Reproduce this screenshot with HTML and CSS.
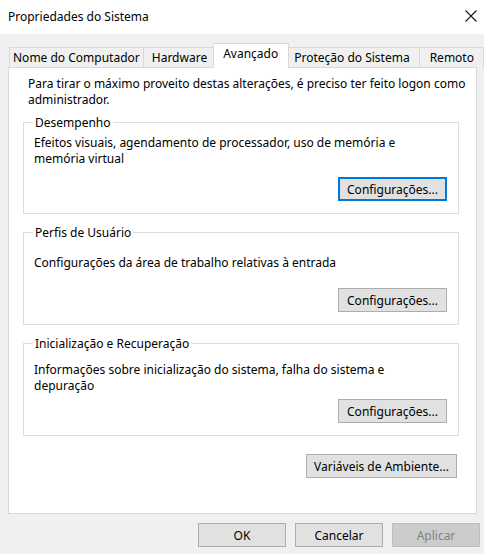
FILE: index.html
```html
<!DOCTYPE html>
<html lang="pt-BR">
<head>
  <meta charset="UTF-8" />
  <title>Propriedades do Sistema</title>
  <link rel="stylesheet" href="styles.css">
</head>
<body>

<div class="window">
  <div class="titlebar">
    <span class="title">Propriedades do Sistema</span>
    <svg class="close" width="12" height="12" viewBox="0 0 12 12">
      <path d="M0.5 0.5 L11.5 11.5 M11.5 0.5 L0.5 11.5" stroke="#1a1a1a" stroke-width="1.1" fill="none" />
    </svg>
  </div>

  <!-- Abas -->
  <div class="tabs">
    <div class="tab tab-first">Nome do Computador</div>
    <div class="tab">Hardware</div>
    <div class="tab active">Avançado</div>
    <div class="tab">Proteção do Sistema</div>
    <div class="tab tab-last">Remoto</div>
  </div>

  <div class="panel">
    <p class="intro">Para tirar o máximo proveito destas alterações, é preciso ter feito logon como<br>administrador.</p>

    <fieldset class="group group-perf">
      <legend>Desempenho</legend>
      <p class="desc">Efeitos visuais, agendamento de processador, uso de memória e<br>memória virtual</p>
      <div class="btn-row"><button class="btn btn-config focus">Configurações...</button></div>
    </fieldset>

    <fieldset class="group group-user">
      <legend>Perfis de Usuário</legend>
      <p class="desc">Configurações da área de trabalho relativas à entrada</p>
      <div class="btn-row"><button class="btn btn-config">Configurações...</button></div>
    </fieldset>

    <fieldset class="group group-boot">
      <legend>Inicialização e Recuperação</legend>
      <p class="desc">Informações sobre inicialização do sistema, falha do sistema e<br>depuração</p>
      <div class="btn-row"><button class="btn btn-config">Configurações...</button></div>
    </fieldset>

    <div class="env-row"><button class="btn btn-env">Variáveis de Ambiente...</button></div>
  </div>

  <div class="actions">
    <button class="btn btn-action">OK</button>
    <button class="btn btn-action">Cancelar</button>
    <button class="btn btn-action" disabled>Aplicar</button>
  </div>
</div>

</body>
</html>
```

FILE: styles.css
```css
body { margin: 0; background: #f0f0f0; font-family: 'Noto Sans', sans-serif; font-size: 12px; color: #000; }
.window { width: 484px; height: 554px; overflow: hidden; }

.titlebar { height: 34px; background: #fff; display: flex; align-items: center; justify-content: space-between; padding: 0 7px 2px 8px; box-sizing: border-box; }
.title { font-size: 12px; }
.close { display: block; }

.tabs { display: flex; padding: 13px 0 0 9px; height: 34px; box-sizing: border-box; }
.tab { height: 21px; box-sizing: border-box; border: 1px solid #d9d9d9; border-bottom: none; margin-left: -1px; padding: 0 8px; line-height: 19px; background: #f0f0f0; }
.tab-first { margin-left: 0; padding: 0 3px; }
.tab-last { padding: 0 9px 0 10px; }
.tab.active { position: relative; z-index: 1; height: 25px; margin: -4px -2px 0 -3px; padding: 0 10px 0 9px; line-height: 19px; background: #fff; }
.tab.active + .tab { border-left: none; padding-right: 9px; }

.panel { position: relative; margin: -1px 7px 0 8px; height: 447px; box-sizing: border-box; border: 1px solid #d9d9d9; background: #fff; padding: 8px 17px 0 14px; }
.intro { margin: 0 0 7px 5px; line-height: 16px; white-space: nowrap; }

.group { margin: 0; padding: 0 11px 12px 10px; border: 1px solid #dcdcdc; min-width: 0; }
.group legend { padding: 0 2px; margin-left: -1px; line-height: 15px; }
.desc { margin: 0; line-height: 16px; }
.btn-row { display: flex; justify-content: flex-end; }

.group-perf .desc { margin-top: 5px; }
.group-perf .btn-row { margin-top: 10px; }
.group-user { margin-top: 11px; }
.group-user .desc { margin-top: 15px; }
.group-user .btn-row { margin-top: 17px; }
.group-boot { margin-top: 11px; }
.group-boot .desc { margin-top: 11px; }
.group-boot .btn-row { margin-top: 5px; }

.btn { font-family: inherit; font-size: 12px; height: 24px; box-sizing: border-box; background: #e1e1e1; border: 1px solid #adadad; color: #000; padding: 0; }
.btn.focus { border: 2px solid #0078d7; }
.btn:disabled { background: #cccccc; border-color: #bfbfbf; color: #838383; }
.btn-config { width: 109px; }
.btn-env { width: 151px; }
.btn-action { width: 88px; }

.env-row { display: flex; justify-content: flex-end; margin: 18px 2px 0 0; }

.actions { display: flex; justify-content: flex-end; gap: 9px; padding: 9px 4px 0 0; }
```
